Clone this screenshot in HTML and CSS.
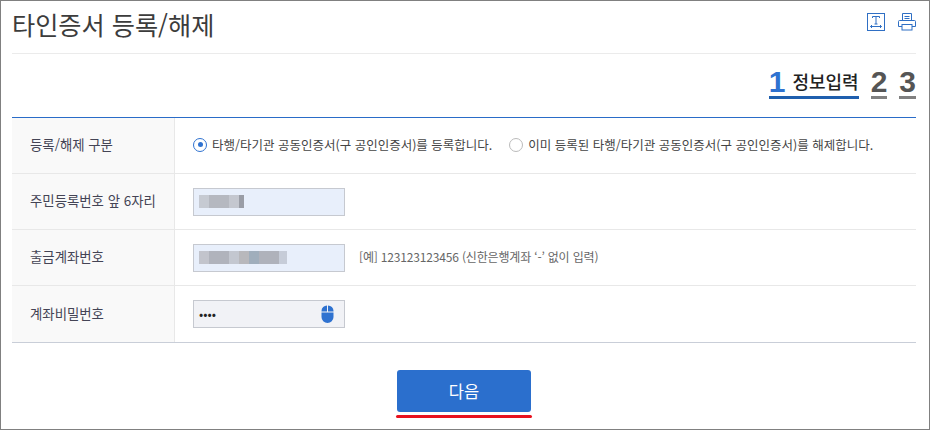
FILE: index.html
```html
<!DOCTYPE html>
<html lang="ko">
<head>
  <meta charset="UTF-8">
  <title>타인증서 등록/해제</title>
  <link rel="stylesheet" href="styles.css">
</head>
<body>
  <div class="page">
    <div class="title-bar">
      <h1>타인증서 등록/해제</h1>
      <div class="tools">
        <svg width="18" height="18" viewBox="0 0 18 18" fill="none" stroke="#2f6fc4" stroke-width="1">
          <rect x="0.5" y="0.5" width="17" height="17"/>
          <path d="M5.5 5V3.5h7V5M9 3.5v7.5M7.5 11h3M3.5 13.5h11M5 12l-1.5 1.5L5 15M13 12l1.5 1.5L13 15"/>
        </svg>
        <svg width="18" height="18" viewBox="0 0 18 18" fill="none" stroke="#2f6fc4" stroke-width="1">
          <path d="M4.5 8V0.5h9V8M6.5 3.5h5M6.5 5.5h5"/>
          <path d="M4 13.5H0.5V8.5q0-1 1-1h15q1 0 1 1v5H14"/>
          <rect x="4" y="11.5" width="10" height="5.5"/>
        </svg>
      </div>
    </div>

    <div class="steps">
      <div class="step active"><b>1</b><span>정보입력</span></div>
      <div class="step"><b>2</b></div>
      <div class="step"><b>3</b></div>
    </div>

    <div class="form-table">
      <div class="row">
        <div class="label">등록/해제 구분</div>
        <div class="field">
          <label class="radio checked"><i></i>타행/타기관 공동인증서(구 공인인증서)를 등록합니다.</label>
          <label class="radio"><i></i>이미 등록된 타행/타기관 공동인증서(구 공인인증서)를 해제합니다.</label>
        </div>
      </div>
      <div class="row">
        <div class="label">주민등록번호 앞 6자리</div>
        <div class="field">
          <div class="input"><span class="mosaic short"></span></div>
        </div>
      </div>
      <div class="row">
        <div class="label">출금계좌번호</div>
        <div class="field">
          <div class="input"><span class="mosaic long"></span></div>
          <p class="hint">[예] 123123123456 (신한은행계좌 ‘-’ 없이 입력)</p>
        </div>
      </div>
      <div class="row">
        <div class="label">계좌비밀번호</div>
        <div class="field">
          <div class="input secure">
            <span class="dots">••••</span>
            <svg width="13" height="18" viewBox="0 0 13 18">
              <path d="M6 0.5v6H0.5V6A5.5 5.5 0 0 1 6 0.5z" fill="#2f72d0"/>
              <path d="M7 0.5A5.5 5.5 0 0 1 12.5 6v0.5H7z" fill="#2f72d0"/>
              <path d="M0.5 7.5h12V12a6 6 0 0 1-12 0z" fill="#2f72d0"/>
            </svg>
          </div>
        </div>
      </div>
    </div>

    <div class="actions">
      <button class="btn-next">다음</button>
      <div class="btn-mark"></div>
    </div>
  </div>
</body>
</html>
```

FILE: styles.css
```css
* {
  box-sizing: border-box;
}
html, body {
  margin: 0;
  padding: 0;
}
body {
  width: 930px;
  height: 430px;
  overflow: hidden;
  background-color: #fff;
  font-family: "Noto Sans CJK KR", "Noto Sans", sans-serif;
  color: #444;
}
.page {
  height: 430px;
  padding: 0 13px 0 11px;
  border: 1px solid #808080;
}
.title-bar {
  height: 53px;
  display: flex;
  justify-content: space-between;
  align-items: flex-start;
  border-bottom: 1px solid #ebebeb;
}
.title-bar h1 {
  margin: 0;
  padding-top: 5px;
  font-size: 25.2px;
  line-height: 36px;
  font-weight: 400;
  color: #3c3c3c;
}
.tools {
  display: flex;
  gap: 13px;
  padding-top: 12px;
}
.steps {
  height: 64px;
  padding-top: 13px;
  display: flex;
  justify-content: flex-end;
  gap: 12px;
  border-bottom: 1px solid #2a6cc8;
}
.step {
  height: 32px;
  display: flex;
  align-items: center;
  gap: 7px;
  border-bottom: 3px solid #808080;
  color: #555;
}
.step b {
  font-family: "Liberation Sans", sans-serif;
  font-size: 30px;
  line-height: 29px;
  font-weight: 700;
}
.step span {
  margin-bottom: 2px;
  font-size: 18px;
  line-height: 24px;
  font-weight: 500;
  color: #222;
}
.step.active {
  border-bottom-color: #1f5fae;
}
.step.active b {
  color: #2f72d0;
}
.form-table {
  border-bottom: 1px solid #c9ced8;
}
.row {
  height: 56px;
  display: flex;
  border-bottom: 1px solid #e8e8e8;
}
.row:last-child {
  border-bottom: none;
}
.label {
  width: 163px;
  padding: 0 0 3px 18px;
  display: flex;
  align-items: center;
  background-color: #f9f9f9;
  border-right: 1px solid #e8e8e8;
  font-size: 13.4px;
  color: #445;
}
.field {
  flex: 1;
  padding-left: 18px;
  display: flex;
  align-items: center;
}
.radio {
  display: flex;
  align-items: center;
  gap: 5px;
  margin: 0 17px 2px 0;
  font-size: 12.5px;
  white-space: nowrap;
  color: #444;
}
.radio i {
  width: 14px;
  height: 14px;
  border: 1px solid #bbb;
  border-radius: 50%;
  display: flex;
  align-items: center;
  justify-content: center;
}
.radio.checked i {
  border-color: #2f72d0;
}
.radio.checked i::after {
  content: "";
  width: 5px;
  height: 5px;
  border-radius: 50%;
  background-color: #2f72d0;
}
.input {
  width: 152px;
  height: 28px;
  padding: 0 5px;
  display: flex;
  align-items: center;
  justify-content: space-between;
  background-color: #e8effb;
  border: 1px solid #c6c9d0;
}
.input.secure {
  background-color: #f1f2f6;
  padding-right: 10px;
}
.mosaic {
  display: block;
  height: 13px;
  filter: blur(0.5px);
}
.mosaic.short {
  width: 45px;
  background: linear-gradient(90deg, #c6cad2 0 10px, #b5b8c0 10px 30px, #c4c7cf 30px 40px, #9a9da6 40px 45px);
}
.mosaic.long {
  width: 88px;
  background: linear-gradient(90deg, #c2c4cc 0 10px, #b0b3bc 10px 30px, #c3c7d0 30px 40px, #b8b8bc 40px 50px, #a0aebc 50px 60px, #afb2bb 60px 80px, #c6ccd8 80px 88px);
}
.dots {
  font-size: 12.5px;
  line-height: 1;
  color: #222;
}
.hint {
  margin: 0 0 2px 14px;
  font-size: 12px;
  letter-spacing: -0.17px;
  color: #666;
}
.actions {
  padding-top: 27px;
  display: flex;
  flex-direction: column;
  align-items: center;
  gap: 3px;
}
.btn-next {
  width: 134px;
  height: 42px;
  border: none;
  border-radius: 3px;
  background-color: #2b6fcd;
  color: #fff;
  font-family: inherit;
  font-size: 16.5px;
}
.btn-mark {
  width: 136px;
  height: 3px;
  border-radius: 2px;
  background-color: #e8121f;
}
```
